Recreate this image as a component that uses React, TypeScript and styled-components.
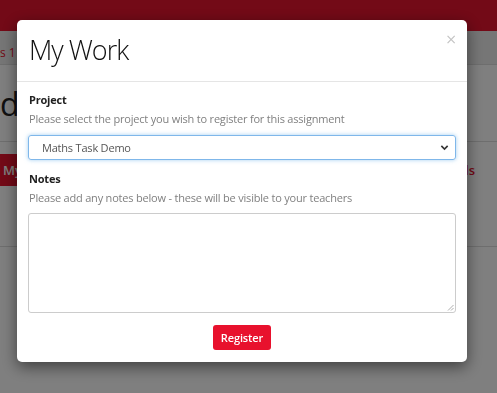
import React from "react";
import styled, { createGlobalStyle } from "styled-components";

const Global = createGlobalStyle`
  html, body { margin: 0; padding: 0; }
  body {
    font-family: "Open Sans", "Liberation Sans", sans-serif;
    background: #fff;
    width: 497px;
    height: 393px;
    overflow: hidden;
  }
  * { box-sizing: border-box; }
`;

const Page = styled.div`
  width: 497px;
  height: 393px;
  display: flex;
  flex-direction: column;
  background: #fff;
`;

const TopBar = styled.div`
  height: 31px;
  background: #e6142e;
  flex-shrink: 0;
`;

const Crumbs = styled.div`
  height: 34px;
  background: #ececec;
  border-bottom: 1px solid #ddd;
  display: flex;
  align-items: center;
  padding-top: 10px;
  font-size: 12px;
  color: #e6142e;
  white-space: nowrap;
`;

const Heading = styled.div`
  height: 77px;
  border-bottom: 1px solid #ddd;
  display: flex;
  align-items: center;
  font-size: 32px;
  color: #222;
  white-space: nowrap;
`;

const TabRow = styled.div`
  height: 105px;
  border-bottom: 1px solid #ddd;
  display: flex;
  align-items: flex-start;
  justify-content: space-between;
  padding-top: 12px;
  padding-right: 22px;
`;

const TabButton = styled.div`
  height: 32px;
  background: #e6142e;
  color: #fff;
  font-size: 13px;
  font-weight: 600;
  display: flex;
  align-items: center;
  padding: 0 10px 0 3px;
`;

const TabLink = styled.div`
  color: #e6142e;
  font-size: 13px;
  font-weight: 600;
  line-height: 32px;
`;

const Overlay = styled.div`
  position: fixed;
  inset: 0;
  background: rgba(0, 0, 0, 0.5);
  display: flex;
  justify-content: center;
  align-items: flex-start;
  padding: 20px 0 0 0;
`;

const Modal = styled.div`
  width: 450px;
  margin-left: -13px;
  background: #fff;
  border-radius: 5px;
  box-shadow: 0 5px 15px rgba(0, 0, 0, 0.5);
  display: flex;
  flex-direction: column;
`;

const ModalHeader = styled.div`
  height: 62px;
  border-bottom: 1px solid #e5e5e5;
  display: flex;
  align-items: flex-start;
  justify-content: space-between;
  padding: 12px 10px 0 12px;
`;

const Title = styled.h4`
  margin: 0;
  font-size: 27px;
  font-weight: 300;
  color: #111;
  line-height: 36px;
  letter-spacing: -1px;
`;

const Close = styled.span`
  color: #c4c4c4;
  font-size: 14px;
  line-height: 14px;
  margin-top: 0px;
  font-family: "DejaVu Sans", sans-serif;
`;

const Body = styled.div`
  padding: 9px 11px 0 11px;
  display: flex;
  flex-direction: column;
  letter-spacing: -0.2px;
`;

const Label = styled.div`
  font-size: 11px;
  font-weight: 700;
  color: #222;
  line-height: 18px;
  padding-left: 1px;
`;

const Help = styled.div`
  font-size: 11px;
  color: #808080;
  line-height: 18px;
  margin-top: 1px;
  padding-left: 1px;
`;

const Select = styled.div`
  margin-top: 7px;
  height: 25px;
  border: 1px solid #7fb7ea;
  border-radius: 3px;
  box-shadow: 0 0 4px rgba(102, 175, 233, 0.6);
  display: flex;
  align-items: center;
  justify-content: space-between;
  padding: 0 6px 0 13px;
  font-size: 11px;
  color: #555;
`;

const Chevron = styled.svg`
  width: 9px;
  height: 9px;
`;

const Spacer = styled.div<{ h: number }>`
  height: ${(p) => p.h}px;
`;

const Notes = styled.div`
  margin-top: 6px;
  height: 100px;
  border: 1px solid #ccc;
  border-radius: 3px;
  position: relative;
`;

const Grip = styled.svg`
  position: absolute;
  right: 1px;
  bottom: 1px;
  width: 7px;
  height: 7px;
`;

const Footer = styled.div`
  display: flex;
  justify-content: center;
  padding: 12px 0 12px 0;
`;

const Button = styled.div`
  height: 25px;
  padding: 0 8px;
  background: #e8112d;
  color: #fff;
  font-size: 11px;
  font-weight: 600;
  letter-spacing: -0.1px;
  border-radius: 3px;
  display: flex;
  align-items: center;
`;

export default function App() {
  return (
    <>
      <Global />
      <Page>
        <TopBar />
        <Crumbs>s 1 &gt;</Crumbs>
        <Heading>din</Heading>
        <TabRow>
          <TabButton>My</TabButton>
          <TabLink>Details</TabLink>
        </TabRow>
      </Page>
      <Overlay>
        <Modal>
          <ModalHeader>
            <Title>My Work</Title>
            <Close>×</Close>
          </ModalHeader>
          <Body>
            <Label>Project</Label>
            <Help>Please select the project you wish to register for this assignment</Help>
            <Select>
              <span>Maths Task Demo</span>
              <Chevron viewBox="0 0 10 10">
                <path d="M1.5 3.2 L5 6.7 L8.5 3.2" fill="none" stroke="#333" strokeWidth="1.8" />
              </Chevron>
            </Select>
            <Spacer h={10} />
            <Label>Notes</Label>
            <Help>Please add any notes below - these will be visible to your teachers</Help>
            <Notes>
              <Grip viewBox="0 0 7 7">
                <path d="M6.5 1 L1 6.5 M6.5 4 L4 6.5" stroke="#999" strokeWidth="0.8" />
              </Grip>
            </Notes>
          </Body>
          <Footer>
            <Button>Register</Button>
          </Footer>
        </Modal>
      </Overlay>
    </>
  );
}
